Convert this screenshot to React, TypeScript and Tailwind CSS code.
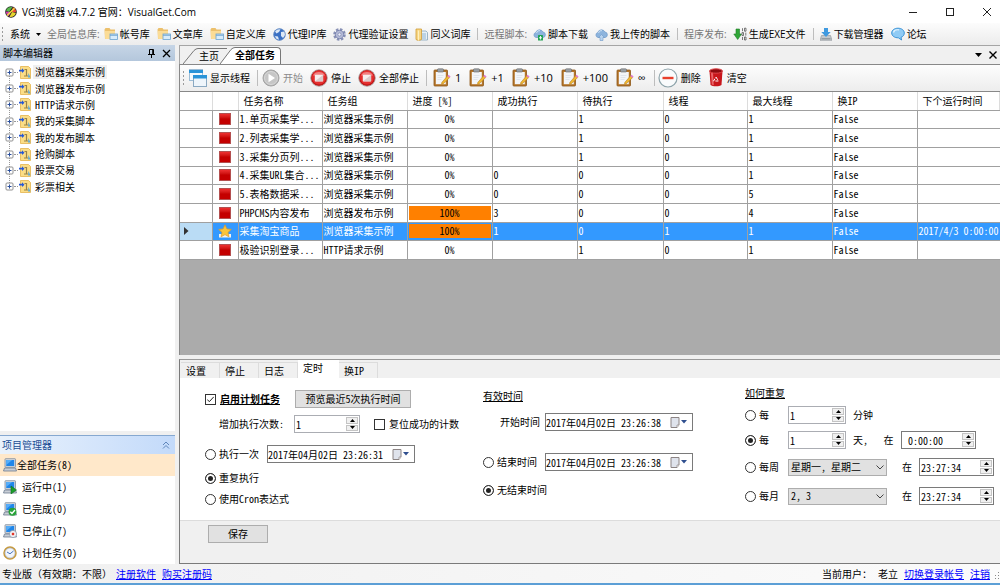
import { useState } from "react";
import type { ReactNode } from "react";

const tree = [
  "浏览器采集示例",
  "浏览器发布示例",
  "HTTP请求示例",
  "我的采集脚本",
  "我的发布脚本",
  "抢购脚本",
  "股票交易",
  "彩票相关",
];

const columns = ["", "", "任务名称", "任务组", "进度 [%]", "成功执行", "待执行", "线程", "最大线程", "换IP", "下个运行时间"];

const tasks = [
  { name: "1.单页采集学...", group: "浏览器采集示例", progress: 0, done: "", wait: "1", threads: "0", max: "1", next: "" },
  { name: "2.列表采集学...", group: "浏览器采集示例", progress: 0, done: "", wait: "1", threads: "0", max: "1", next: "" },
  { name: "3.采集分页列...", group: "浏览器采集示例", progress: 0, done: "", wait: "1", threads: "0", max: "1", next: "" },
  { name: "4.采集URL集合...", group: "浏览器采集示例", progress: 0, done: "0", wait: "0", threads: "0", max: "1", next: "" },
  { name: "5.表格数据采...", group: "浏览器采集示例", progress: 0, done: "0", wait: "0", threads: "0", max: "5", next: "" },
  { name: "PHPCMS内容发布", group: "浏览器发布示例", progress: 100, done: "3", wait: "0", threads: "0", max: "4", next: "" },
  { name: "采集淘宝商品", group: "浏览器采集示例", progress: 100, done: "1", wait: "0", threads: "1", max: "1", next: "2017/4/3 0:00:00" },
  { name: "极验识别登录...", group: "HTTP请求示例", progress: 0, done: "", wait: "1", threads: "0", max: "1", next: "" },
];

const FolderIcon = () => (
  <svg width="14" height="14" viewBox="0 0 14 14">
    <path d="M0.5 2.5 1.5 1h4l1 1.5H11V12H1z" fill="#ecc06c" />
    <path d="M0.8 4H11v8H1.2z" fill="#fbdc96" />
    <rect x="6" y="7" width="7.5" height="5.5" fill="#d8ecfb" stroke="#6ba3cf" strokeWidth="0.8" />
    <path d="M6 8.2h7.5" stroke="#6ba3cf" />
  </svg>
);

const GlobeIcon = () => (
  <svg width="13" height="13" viewBox="0 0 13 13">
    <circle cx="6.5" cy="6.5" r="6" fill="#3a70c4" />
    <path d="M2 3.5C4 1 6 1 7.5 1.6L6 4 3.5 5.5zM8 4l3.5-.5L12.3 7 10 10 8 8zM2 8l3 .5L6 12 3 10.5z" fill="#dce8f6" />
    <circle cx="6.5" cy="6.5" r="5.8" fill="none" stroke="#7395c6" strokeWidth="0.8" />
  </svg>
);

const GearIcon = () => (
  <svg width="13" height="13" viewBox="0 0 13 13">
    <circle cx="6.5" cy="6.5" r="5" fill="none" stroke="#8790b5" strokeWidth="2.6" strokeDasharray="2.4 1.5" />
    <circle cx="6.5" cy="6.5" r="4.2" fill="#b4bad6" stroke="#7c86b0" />
    <circle cx="6.5" cy="6.5" r="1.6" fill="#eef0f8" stroke="#7c86b0" strokeWidth="0.7" />
  </svg>
);

const BookIcon = () => (
  <svg width="13" height="13" viewBox="0 0 13 13">
    <path d="M5 3h6l1.5 1.5V12H5z" fill="#e6f0f8" stroke="#87a6bb" strokeWidth="0.8" />
    <path d="M7 6h4M7 8h4M7 10h4" stroke="#79a6c8" strokeWidth="0.8" />
    <path d="M1 1h5.5v10.5L3.5 12.6 1 11.5z" fill="#f7d683" stroke="#cf9c36" strokeWidth="0.8" />
    <path d="M3.5 2.5v10" stroke="#fff0bd" />
  </svg>
);

const CloudIcon = ({ add = false }: { add?: boolean }) => (
  <svg width="13" height="13" viewBox="0 0 13 13">
    <path d="M3 9.5a2.6 2.6 0 0 1-.3-5A4 4 0 0 1 10 4a2.8 2.8 0 0 1 .2 5.5z" fill="#8db4dd" stroke="#6d98c8" strokeWidth="0.7" />
    <path d="M3.5 5A3 3 0 0 1 7 2.6" stroke="#cfe2f5" fill="none" />
    {add ? (
      <>
        <rect x="5" y="7" width="5" height="5.5" rx="0.6" fill="#23a455" />
        <path d="M7.5 8v3.5M6 9.8h3" stroke="#fff" strokeWidth="0.9" />
      </>
    ) : (
      <path d="M6.5 6.5 9.5 9.5H8v3H5v-3H3.5z" fill="#b9d3ee" stroke="#6d98c8" strokeWidth="0.6" />
    )}
  </svg>
);

const ExeIcon = () => (
  <svg width="14" height="14" viewBox="0 0 14 14">
    <path d="M3 2h3.5v5H8.5L4.7 12.5 0.8 7H3z" fill="#2fa637" stroke="#1e7d27" strokeWidth="0.6" />
    <path d="M9.5 1.2v3M11.5 1.2h1.5v3h-1.5zM9 5.6h1.5v3H9zM12.8 5.6v3M9.5 10v3M11.5 10h1.5v3h-1.5z" fill="none" stroke="#444" strokeWidth="0.7" />
  </svg>
);

const DownloadIcon = () => (
  <svg width="12" height="14" viewBox="0 0 12 14">
    <path d="M1.5 8.5h9L12 13.3H0z" fill="#c3c8cc" stroke="#8a9196" strokeWidth="0.6" />
    <path d="M4 1h4v4h2.7L6 10 1.3 5H4z" fill="#3f9ae0" />
    <path d="M1.5 11.8h9" stroke="#717a80" strokeWidth="0.8" />
  </svg>
);

const BubbleIcon = () => (
  <svg width="14" height="14" viewBox="0 0 14 14">
    <path d="M7 1.2c3.5 0 6.3 2 6.3 4.8 0 2-1.3 3.6-3.3 4.4L10.6 13 7.4 10.8C3.6 10.9.7 8.9.7 6S3.5 1.2 7 1.2z" fill="#8fcbf5" stroke="#2e8bd2" strokeWidth="0.9" />
    <path d="M2.5 5.5C3 3.5 5.5 2.5 8 2.9" stroke="#e6f5ff" strokeWidth="1.2" fill="none" />
  </svg>
);

const WindowsIcon = () => (
  <svg width="18" height="18" viewBox="0 0 18 18">
    <rect x="0.5" y="0.5" width="13" height="11" fill="#f4f9fd" stroke="#9dbdd6" />
    <path d="M0 1h14v3H0z" fill="#2b94d8" />
    <rect x="4.5" y="6.5" width="13" height="11" fill="#eef5fb" stroke="#8aa9c2" />
    <path d="M4 6h14v3.5H4z" fill="#2b94d8" />
  </svg>
);

const PlayIcon = () => (
  <svg width="18" height="18" viewBox="0 0 18 18">
    <circle cx="9" cy="9" r="8" fill="#b9b9b9" stroke="#a3a3a3" />
    <circle cx="9" cy="9" r="6.5" fill="#c6c6c6" stroke="#d8d8d8" />
    <path d="M6.5 4.8 13 9l-6.5 4.2z" fill="#fff" />
  </svg>
);

const StopIcon = () => (
  <svg width="18" height="18" viewBox="0 0 18 18">
    <circle cx="9" cy="9" r="8.3" fill="#c01616" stroke="#a9a3a3" strokeWidth="0.8" />
    <circle cx="9" cy="8.5" r="7" fill="#e52f2f" />
    <path d="M3 6.5a6.5 5.5 0 0 1 12 0z" fill="#f28080" />
    <rect x="4.8" y="5.8" width="8.4" height="6.7" rx="0.8" fill="#f6eeee" />
    <path d="M5 12.3 13 6v6.3z" fill="#d9cccc" />
  </svg>
);

const ClipIcon = () => (
  <svg width="18" height="19" viewBox="0 0 18 19">
    <rect x="1" y="2" width="13.5" height="16" rx="0.8" fill="#b5762a" stroke="#8d5718" strokeWidth="0.8" />
    <path d="M2.8 4h10v12.2h-10z" fill="#f3f5f8" />
    <rect x="4.5" y="0.8" width="6" height="3.2" rx="0.8" fill="#9aa0a6" stroke="#666" strokeWidth="0.6" />
    <path d="M4.5 7.5h6M4.5 9.5h5M4.5 11.5h4" stroke="#dbe1e8" strokeWidth="0.8" />
    <path d="M14.6 7.8 16.6 9.6 10.6 15.6 8.4 16.4 9 14.2z" fill="#f0b732" stroke="#b98320" strokeWidth="0.6" />
    <path d="m14.3 8 1.3-1.3 2 1.9-1.3 1.2z" fill="#e07bd0" />
  </svg>
);

const MinusIcon = () => (
  <svg width="20" height="20" viewBox="0 0 20 20">
    <circle cx="10" cy="10" r="9" fill="#f9fbfc" stroke="#8ea4ab" strokeWidth="1.2" />
    <path d="M4.5 8.8h11v2.4h-11z" fill="#e8402c" />
  </svg>
);

const TrashIcon = () => (
  <svg width="16" height="19" viewBox="0 0 16 19">
    <path d="M1.5 3 2.5 17c2 1.800 9 1.800 11 0l1-14z" fill="#c8161b" />
    <path d="M3 5 3.8 16.5l2 .7L5 5z" fill="#ea6467" />
    <ellipse cx="8" cy="3" rx="6.5" ry="2.2" fill="#8d0c10" stroke="#e2464a" />
    <path d="M8 9 10.4 13H5.6z" fill="none" stroke="#fff" strokeWidth="1" strokeDasharray="3.2 1.3" />
  </svg>
);

const ScriptIcon = () => (
  <svg width="12" height="13" viewBox="0 0 12 13">
    <path d="M1.5 0.5h8l2 2v10h-10z" fill="#fbdd86" stroke="#e3b24c" strokeWidth="0.8" />
    <path d="M5.5 3.5h2v6M5 10h4" stroke="#9a8448" strokeWidth="1.2" fill="none" />
    <path d="M0 3.8h3V2.3L5.5 4.7 3 7V5.6H0z" fill="#2558d8" />
    <path d="m9.500 7 2 4.500H9z" fill="#5ba7d8" />
  </svg>
);

const ComputerIcon = ({ badge }: { badge?: string }) => (
  <svg width="14" height="14" viewBox="0 0 14 14">
    <rect x="2" y="0.7" width="10.5" height="8.6" rx="0.6" fill="#d5d9df" stroke="#7f8c9c" strokeWidth="0.8" />
    <rect x="3.2" y="2" width="8" height="6" fill="#1f86ea" />
    <path d="M3.2 2h6L3.2 7z" fill="#56adf8" />
    <path d="M1.5 10h11l1 3H0.5z" fill="#c9ced6" stroke="#6c7c91" strokeWidth="0.8" />
    {badge === "run" && <path d="M8 6v8l5.500-4z" fill="#1b9e2b" stroke="#0f6d1b" strokeWidth="0.6" />}
    {badge === "done" && (
      <>
        <circle cx="9.5" cy="9.7" r="4" fill="#27a338" />
        <path d="m7.3 9.7 1.7 1.8 3-3.5" stroke="#fff" strokeWidth="1.4" fill="none" />
      </>
    )}
    {badge === "stop" && (
      <>
        <circle cx="10" cy="10" r="3.6" fill="#f3f5f8" stroke="#8a98aa" strokeWidth="0.8" />
        <rect x="8.8" y="8.8" width="2.4" height="2.4" fill="#e0352a" />
      </>
    )}
  </svg>
);

const ClockIcon = () => (
  <svg width="14" height="14" viewBox="0 0 14 14">
    <circle cx="7" cy="7" r="6" fill="#f1f5fb" stroke="#c89a3c" strokeWidth="1.5" />
    <circle cx="7" cy="7" r="5" fill="none" stroke="#8d97a6" strokeWidth="0.5" />
    <path d="m4 6 3 1.800L10.500 5" stroke="#4675c0" strokeWidth="1" fill="none" />
  </svg>
);

const StarIcon = () => (
  <svg width="14" height="14" viewBox="0 0 14 14">
    <path d="M1 10h12v3.5H1z" fill="#f2f2ee" />
    <path d="m7 .8 1.900 4.100 4.400.5-3.300 3 .9 4.400L7 10.600l-3.900 2.200.9-4.400-3.300-3 4.400-.5z" fill="#fac53c" stroke="#de9a25" strokeWidth="0.7" />
  </svg>
);

const Grip = () => (
  <svg width="3" height="14" viewBox="0 0 3 14">
    <path d="M1.5 0v14" stroke="#9a9a9a" strokeDasharray="2 2" />
  </svg>
);

function MenuItem({ icon, children }: { icon: ReactNode; children: ReactNode }) {
  return (
    <button type="button" className="mr-[7px] flex shrink-0 items-center gap-[2px]">
      {icon}
      {children}
    </button>
  );
}

function ToolItem({ icon, children, disabled }: { icon: ReactNode; children: ReactNode; disabled?: boolean }) {
  return (
    <button type="button" disabled={disabled} className="mr-[7px] flex shrink-0 items-center gap-[3px] disabled:text-[#8b8b8b]">
      {icon}
      {children}
    </button>
  );
}

function CountItem({ children }: { children: ReactNode }) {
  return (
    <button type="button" className="mr-2 flex shrink-0 items-center gap-1 text-[11px]">
      <ClipIcon />
      {children}
    </button>
  );
}

function Arrows() {
  return (
    <span className="flex h-full w-3 shrink-0 flex-col gap-px">
      <button type="button" aria-label="+" className="flex flex-1 items-center justify-center border border-[#c4c4c4] bg-[#f0f0f0]">
        <svg width="5" height="3" viewBox="0 0 5 3"><path d="M0 3 2.5 0 5 3z" /></svg>
      </button>
      <button type="button" aria-label="-" className="flex flex-1 items-center justify-center border border-[#c4c4c4] bg-[#f0f0f0]">
        <svg width="5" height="3" viewBox="0 0 5 3"><path d="M0 0 2.5 3 5 0z" /></svg>
      </button>
    </span>
  );
}

function Spinner({ label, value, wide, time }: { label: string; value: string; wide?: boolean; time?: boolean }) {
  return (
    <span
      className={`flex h-[18px] shrink-0 items-center border bg-white p-px ${time ? "w-[75px] border-[#7a7a7a]" : "border-[#abadb3]"} ${
        time ? "" : wide ? "w-[66px]" : "w-[58px]"
      }`}
    >
      <input aria-label={label} defaultValue={value} className="h-full w-0 min-w-0 flex-1 bg-transparent outline-none" />
      <Arrows />
    </span>
  );
}

function DateField({ label, value }: { label: string; value: string }) {
  return (
    <span className="flex h-[18px] w-[148px] shrink-0 items-center border border-[#7a7a7a] bg-white pr-[5px]">
      <input aria-label={label} defaultValue={value} className="h-full w-0 min-w-0 flex-1 bg-transparent outline-none" />
      <button type="button" aria-label={label} className="flex items-center gap-px">
        <svg width="10" height="11" viewBox="0 0 10 11">
          <path d="M1 0.5h8v7.5L7 10.5H1z" fill="#dfe3ec" stroke="#8c8484" />
          <path d="M9 8H7v2.5" fill="#fff" stroke="#8c8484" strokeWidth="0.7" />
        </svg>
        <svg width="6" height="4" viewBox="0 0 6 4"><path d="M0 0h6L3 3.5z" fill="#2f4f8f" /></svg>
      </button>
    </span>
  );
}

function Radio({ id, name, checked, children }: { id: string; name: string; checked?: boolean; children: ReactNode }) {
  return (
    <label htmlFor={id} className="flex shrink-0 items-center gap-[3px]">
      <input
        id={id}
        type="radio"
        name={name}
        defaultChecked={checked}
        className="size-[11px] appearance-none rounded-full border border-[#333] bg-white checked:bg-[#222] checked:shadow-[inset_0_0_0_2px_white]"
      />
      {children}
    </label>
  );
}

function Combo({ label, value }: { label: string; value: string }) {
  return (
    <span className="relative h-[17px] w-[99px] shrink-0">
      <select aria-label={label} className="block h-full w-full appearance-none border border-[#adadad] bg-[#e1e1e1] pl-[2px] leading-[14px]">
        <option>{value}</option>
      </select>
      <svg className="pointer-events-none absolute top-[6px] right-[3px]" width="8" height="5" viewBox="0 0 8 5">
        <path d="m.5.5 3.500 3.500L7.500.5" fill="none" stroke="#444" />
      </svg>
    </span>
  );
}

function Check({ id, checked, children }: { id: string; checked?: boolean; children: ReactNode }) {
  return (
    <label htmlFor={id} className="flex shrink-0 items-center gap-1">
      <span className="relative flex">
        <input id={id} type="checkbox" defaultChecked={checked} className="peer size-[11px] appearance-none border border-[#333] bg-white" />
        <svg className="pointer-events-none absolute inset-[2px] hidden peer-checked:block" width="7" height="7" viewBox="0 0 7 7">
          <path d="m.3 3.500 2 2.200L6.800.8" fill="none" stroke="#222" />
        </svg>
      </span>
      {children}
    </label>
  );
}

export default function App() {
  const [tab, setTab] = useState("定时");
  const [selected, setSelected] = useState(6);

  const projects = [
    { icon: <ComputerIcon />, text: "全部任务(8)" },
    { icon: <ComputerIcon badge="run" />, text: "运行中(1)" },
    { icon: <ComputerIcon badge="done" />, text: "已完成(0)" },
    { icon: <ComputerIcon badge="stop" />, text: "已停止(7)" },
    { icon: <ClockIcon />, text: "计划任务(0)" },
  ];

  return (
    <div className="flex min-h-screen flex-col overflow-hidden border-b-2 border-[#5c9fd6] bg-[#f0f0f0] font-['Open_Sans','Noto_Sans_CJK_SC',sans-serif] text-[10px] leading-[14px] text-black">
      {/* Title bar */}
      <header className="flex h-[23px] items-center bg-white pr-2 pl-[5px]">
        <svg width="12" height="12" viewBox="0 0 12 12">
          <circle cx="6" cy="6" r="5.8" fill="#222" />
          <path d="M1 4.5C2 1.5 5 .5 7.5 1L4 6z" fill="#58b94b" />
          <path d="M8 1.200c2 .8 3.200 2.600 3 5L6 6z" fill="#e9483c" />
          <path d="M10.800 7C10 10 7 11.500 4.500 10.800L7 6z" fill="#e6d52f" />
          <path d="M3.800 10.300C1.800 9.200.8 7.500 1 5.500L6 6z" fill="#cf3fb0" />
          <path d="M2 9.5 9.5 2.2" stroke="#f3e238" strokeWidth="1.3" />
        </svg>
        <h1 className="ml-[5px] flex-1">VG浏览器 v4.7.2 官网：VisualGet.Com</h1>
        <div className="flex items-center gap-[27px]">
          <button type="button" aria-label="最小化"><svg width="10" height="10" viewBox="0 0 10 10"><path d="M1 5.5h8" stroke="#222" /></svg></button>
          <button type="button" aria-label="最大化"><svg width="10" height="10" viewBox="0 0 10 10"><rect x="1.5" y="1.5" width="7" height="7" fill="none" stroke="#222" /></svg></button>
          <button type="button" aria-label="关闭"><svg width="10" height="10" viewBox="0 0 10 10"><path d="m1 1 8 8M9 1 1 9" stroke="#222" /></svg></button>
        </div>
      </header>

      {/* Menu bar */}
      <nav className="flex h-[22px] items-center bg-linear-to-b from-[#fcfcfc] to-[#ececec] pl-px">
        <Grip />
        <button type="button" className="ml-[6px] flex shrink-0 items-center gap-[6px]">
          系统
          <svg width="5" height="3" viewBox="0 0 5 3"><path d="M0 0h5L2.500 3z" /></svg>
        </button>
        <span className="mr-1 ml-[6px] shrink-0 text-[#777]">全局信息库:</span>
        <MenuItem icon={<FolderIcon />}>帐号库</MenuItem>
        <MenuItem icon={<FolderIcon />}>文章库</MenuItem>
        <MenuItem icon={<FolderIcon />}>自定义库</MenuItem>
        <MenuItem icon={<GlobeIcon />}>代理IP库</MenuItem>
        <MenuItem icon={<GearIcon />}>代理验证设置</MenuItem>
        <MenuItem icon={<BookIcon />}>同义词库</MenuItem>
        <span className="mr-[6px] h-3 w-px bg-[#bdbdbd]" />
        <span className="mr-[6px] shrink-0 text-[#777]">远程脚本:</span>
        <MenuItem icon={<CloudIcon add />}>脚本下载</MenuItem>
        <MenuItem icon={<CloudIcon />}>我上传的脚本</MenuItem>
        <span className="mr-[6px] h-3 w-px bg-[#bdbdbd]" />
        <span className="mr-[6px] shrink-0 text-[#777]">程序发布:</span>
        <MenuItem icon={<ExeIcon />}>生成EXE文件</MenuItem>
        <span className="mr-[6px] h-3 w-px bg-[#bdbdbd]" />
        <MenuItem icon={<DownloadIcon />}>下载管理器</MenuItem>
        <MenuItem icon={<BubbleIcon />}>论坛</MenuItem>
      </nav>

      <div className="flex flex-1 font-['Noto_Sans_Mono_CJK_SC','Noto_Sans_CJK_SC',sans-serif]">
        {/* Left column */}
        <aside className="mr-1 flex w-[175px] shrink-0 flex-col">
          <div className="flex h-4 items-center bg-linear-to-b from-[#c6d5e6] to-[#b4c7dc] px-[3px]">
            <h2 className="flex-1">脚本编辑器</h2>
            <button type="button" aria-label="固定" className="mr-[7px]">
              <svg width="7" height="9" viewBox="0 0 7 9"><path d="M1.5 5V.5h4V5M0 5.5h7M3.5 5.5V9M4.7.5V5" fill="none" stroke="#000" /></svg>
            </button>
            <button type="button" aria-label="关闭" className="mr-px">
              <svg width="9" height="9" viewBox="0 0 9 9"><path d="m1 1 7 7M8 1 1 8" stroke="#000" strokeWidth="1.3" /></svg>
            </button>
          </div>
          <div className="flex-1 bg-white pt-[3px]">
            <ul className="relative grid h-[131px] auto-rows-fr">
              <li aria-hidden="true" className="absolute top-2 bottom-2 left-[9px] border-l border-dotted border-[#999]" />
              {tree.map((item, i) => (
                <li key={item} className="relative flex items-center pl-[5px]">
                  <button type="button" aria-label={item} className="flex">
                    <svg width="9" height="9" viewBox="0 0 9 9">
                      <rect x="1" y="1" width="7" height="7" rx="1" fill="#fff" stroke="#919191" />
                      <path d="M2.500 4.500h4M4.500 2.500v4" stroke="#2a4f9c" />
                    </svg>
                  </button>
                  <span className="mr-px w-1 border-t border-dotted border-[#999]" />
                  <ScriptIcon />
                  <span className={`ml-[2px] px-[2px] ${i === 0 ? "bg-[#f0f0f0]" : ""}`}>{item}</span>
                </li>
              ))}
            </ul>
          </div>
          <div className="mt-1 flex h-[19px] items-center border-t border-[#86a8d0] bg-linear-to-r from-[#e9f2fc] to-[#c3dafa] px-[2px] pb-px text-[#1b4c93]">
            <h2 className="flex-1">项目管理器</h2>
            <button type="button" aria-label="折叠" className="mr-[3px]">
              <svg width="8" height="8" viewBox="0 0 8 8"><path d="m1 4 3-3 3 3M1 7.500l3-3 3 3" fill="none" stroke="#5f86bb" /></svg>
            </button>
          </div>
          <ul className="bg-white">
            {projects.map((p, i) => (
              <li key={p.text}>
                <button
                  type="button"
                  className={`flex h-[22px] w-full items-center pl-[3px] ${i === 0 ? "bg-[#ffe8ca]" : "gap-[5px]"}`}
                >
                  {p.icon}
                  {p.text}
                </button>
              </li>
            ))}
          </ul>
        </aside>

        {/* Main column */}
        <main className="flex min-w-0 flex-1 flex-col">
          <div className="flex h-[19px] items-end border-t border-l border-[#a5a5a5] pl-[3px]">
            <button type="button" className="flex h-4 items-stretch">
              <svg width="15" height="16" viewBox="0 0 15 16"><path d="M0 16 11 2.500Q13 .5 15 .5" fill="none" stroke="#777" /></svg>
              <span className="border-t border-[#777] pr-2 pl-px">主页</span>
            </button>
            <button type="button" className="-ml-[7px] flex h-[17px] items-stretch">
              <svg width="15" height="17" viewBox="0 0 15 17"><path d="M0 17 11 2.500Q13 .5 15 .5V17z" fill="#fff" /><path d="M0 17 11 2.500Q13 .5 15 .5" fill="none" stroke="#777" /></svg>
              <span className="rounded-tr-sm border-t border-r border-[#777] bg-white pr-[5px] font-bold">全部任务</span>
            </button>
            <div className="flex h-full flex-1 items-center justify-end gap-[7px] pr-[3px]">
              <button type="button" aria-label="列表"><svg width="7" height="4" viewBox="0 0 7 4"><path d="M0 0h7L3.500 4z" /></svg></button>
              <button type="button" aria-label="关闭"><svg width="8" height="8" viewBox="0 0 8 8"><path d="m.5.5 7 7M7.500.5l-7 7" stroke="#000" strokeWidth="1.4" /></svg></button>
            </div>
          </div>

          <div className="flex h-[27px] items-center border-t border-l border-[#888] bg-linear-to-b from-[#fdfdfd] to-[#ededed] pb-px pl-[2px] font-['Open_Sans','Noto_Sans_CJK_SC',sans-serif]">
            <Grip />
            <span className="w-1" />
            <ToolItem icon={<WindowsIcon />}>显示线程</ToolItem>
            <span className="mr-1 h-4 w-px bg-[#bdbdbd]" />
            <ToolItem icon={<PlayIcon />} disabled>开始</ToolItem>
            <ToolItem icon={<StopIcon />}>停止</ToolItem>
            <ToolItem icon={<StopIcon />}>全部停止</ToolItem>
            <span className="mr-[6px] h-4 w-px bg-[#bdbdbd]" />
            <CountItem>1</CountItem>
            <CountItem>+1</CountItem>
            <CountItem>+10</CountItem>
            <CountItem>+100</CountItem>
            <CountItem>∞</CountItem>
            <span className="mr-[3px] h-4 w-px bg-[#bdbdbd]" />
            <ToolItem icon={<MinusIcon />}>删除</ToolItem>
            <ToolItem icon={<TrashIcon />}>清空</ToolItem>
          </div>

          <div className="flex-1 border-t border-l border-[#888] bg-[#ababab]">
            <table className="h-[168px] w-full table-fixed border-collapse bg-white">
              <colgroup>
                <col className="w-8" />
                <col className="w-[26px]" />
                <col className="w-[84px]" />
                <col className="w-[85px]" />
                <col className="w-[85px]" />
                <col className="w-[85px]" />
                <col className="w-[86px]" />
                <col className="w-[84px]" />
                <col className="w-[85px]" />
                <col className="w-[85px]" />
                <col />
              </colgroup>
              <thead>
                <tr>
                  {columns.map((c, i) => (
                    <th key={i} className="h-[18px] border-r border-b border-r-[#dcdcdc] border-b-[#a0a0a0] pl-[5px] text-left font-normal whitespace-nowrap">{c}</th>
                  ))}
                </tr>
              </thead>
              <tbody>
                {tasks.map((t, i) => (
                  <tr key={t.name} onClick={() => setSelected(i)} className={i === selected ? "bg-[#3399ff] text-white" : ""}>
                    <td className={`border border-l-0 border-[#a0a0a0] pl-1 ${i === selected ? "bg-[#badcf5]" : ""}`}>
                      {i === selected && <svg width="5" height="8" viewBox="0 0 5 8"><path d="M0 0v8l4.500-4z" fill="#333" /></svg>}
                    </td>
                    <td className="border border-[#a0a0a0]">
                      <div className="flex justify-center">
                        {i === 6 ? <StarIcon /> : <span className="h-3 w-3 border border-[#b45050] bg-linear-to-b from-[#ee3030] to-[#c40000] to-50%" />}
                      </div>
                    </td>
                    <td className="overflow-hidden border border-[#a0a0a0] pl-px whitespace-nowrap">{t.name}</td>
                    <td className="overflow-hidden border border-[#a0a0a0] pl-px whitespace-nowrap">{t.group}</td>
                    <td className="border border-[#a0a0a0] px-px text-center text-black">
                      <div className={t.progress ? "bg-[#ff8000]" : ""} style={{ width: t.progress ? `${t.progress}%` : undefined }}>{t.progress}%</div>
                    </td>
                    <td className="border border-[#a0a0a0] pl-px">{t.done}</td>
                    <td className="border border-[#a0a0a0] pl-px">{t.wait}</td>
                    <td className="border border-[#a0a0a0] pl-px">{t.threads}</td>
                    <td className="border border-[#a0a0a0] pl-px">{t.max}</td>
                    <td className="border border-[#a0a0a0] pl-px">False</td>
                    <td className="overflow-hidden border border-r-0 border-[#a0a0a0] pl-px whitespace-nowrap">{t.next}</td>
                  </tr>
                ))}
              </tbody>
            </table>
          </div>

          {/* Task settings */}
          <section className="mt-1 border border-r-0 border-[#7a7a7a] border-t-[#999]">
            <div className="flex h-[18px] items-end pl-px" role="tablist">
              {["设置", "停止", "日志", "定时", "换IP"].map((name) => (
                <button
                  key={name}
                  type="button"
                  role="tab"
                  aria-selected={tab === name}
                  onClick={() => setTab(name)}
                  className={
                    tab === name
                      ? "h-[18px] w-[41px] bg-white pb-[3px] pl-[5px] text-left"
                      : "h-[16px] w-[39px] border-t border-r border-[#dcdcdc] pl-[5px] text-left"
                  }
                >
                  {name}
                </button>
              ))}
            </div>
            <div className="grid h-[143px] grid-cols-[278px_262px_1fr] border-b border-[#dcdcdc] bg-white pl-[25px]">
              <div className="flex flex-col items-start pt-3">
                <div className="flex h-[18px] items-center">
                  <Check id="enable" checked><span className="font-bold underline">启用计划任务</span></Check>
                  <button type="button" className="ml-[15px] h-[18px] w-[116px] border border-[#adadad] bg-[#e1e1e1]">预览最近5次执行时间</button>
                </div>
                <div className="mt-[7px] flex h-[18px] items-center pl-[14px]">
                  <span className="w-[75px]">增加执行次数:</span>
                  <Spinner label="增加执行次数" value="1" wide />
                  <span className="w-[14px]" />
                  <Check id="reset">复位成功的计数</Check>
                </div>
                <div className="mt-3 flex h-[18px] items-center">
                  <Radio id="once" name="mode">执行一次</Radio>
                  <span className="w-2" />
                  <DateField label="执行一次" value="2017年04月02日 23:26:31" />
                </div>
                <div className="mt-[7px] flex h-4 items-center"><Radio id="repeat" name="mode" checked>重复执行</Radio></div>
                <div className="mt-[5px] flex h-4 items-center"><Radio id="cron" name="mode">使用Cron表达式</Radio></div>
              </div>

              <div className="flex flex-col items-start pt-[11px]">
                <h3 className="h-4 underline">有效时间</h3>
                <div className="mt-2 flex h-[18px] items-center pl-[17px]">
                  <span className="w-[45px]">开始时间</span>
                  <DateField label="开始时间" value="2017年04月02日 23:26:38" />
                </div>
                <div className="mt-[22px] flex h-[18px] items-center">
                  <Radio id="end" name="end">结束时间</Radio>
                  <span className="w-2" />
                  <DateField label="结束时间" value="2017年04月02日 23:26:38" />
                </div>
                <div className="mt-[11px] flex h-4 items-center"><Radio id="noend" name="end" checked>无结束时间</Radio></div>
              </div>

              <div className="flex flex-col items-start pt-2">
                <h3 className="h-4 underline">如何重复</h3>
                <div className="mt-1 flex h-[18px] items-center">
                  <span className="w-[43px]"><Radio id="minute" name="cycle">每</Radio></span>
                  <Spinner label="分钟" value="1" />
                  <span className="ml-[7px]">分钟</span>
                </div>
                <div className="mt-[7px] flex h-[18px] items-center">
                  <span className="w-[43px]"><Radio id="day" name="cycle" checked>每</Radio></span>
                  <Spinner label="天" value="1" />
                  <span className="w-[30px] pl-[7px]">天,</span>
                  <span className="w-[25px] text-center">在</span>
                  <Spinner label="每天时间" value=" 0:00:00" time />
                </div>
                <div className="mt-[9px] flex h-[18px] items-center">
                  <span className="w-[43px]"><Radio id="week" name="cycle">每周</Radio></span>
                  <Combo label="每周" value="星期一, 星期二" />
                  <span className="w-8 pl-[15px]">在</span>
                  <Spinner label="每周时间" value="23:27:34" time />
                </div>
                <div className="mt-[11px] flex h-[18px] items-center">
                  <span className="w-[43px]"><Radio id="month" name="cycle">每月</Radio></span>
                  <Combo label="每月" value="2, 3" />
                  <span className="w-8 pl-[15px]">在</span>
                  <Spinner label="每月时间" value="23:27:34" time />
                </div>
              </div>
            </div>
            <div className="pt-1 pb-5 pl-7">
              <button type="button" className="block h-[18px] w-[60px] border border-[#adadad] bg-[#e1e1e1]">保存</button>
            </div>
          </section>
        </main>
      </div>

      {/* Status bar */}
      <footer className="flex h-[19px] items-center justify-between bg-linear-to-r from-[#f0f0f0] to-[#fbfbfb] pl-[2px]">
        <div className="flex">
          <span>专业版（有效期：不限）</span>
          <a href="#register" className="ml-1 text-[#0000ff] underline">注册软件</a>
          <a href="#buy" className="ml-[6px] text-[#0000ff] underline">购买注册码</a>
        </div>
        <div className="flex items-center">
          <span>当前用户：</span>
          <span className="ml-[6px]">老立</span>
          <a href="#switch" className="ml-[6px] text-[#0000ff] underline">切换登录帐号</a>
          <a href="#logout" className="ml-[6px] text-[#0000ff] underline">注销</a>
          <svg className="ml-1" width="6" height="10" viewBox="0 0 6 10"><path d="M4 3h1v1H4zM4 6h1v1H4zM1 6h1v1H1zM4 9h1v1H4zM1 9h1v1H1z" fill="#888" /></svg>
        </div>
      </footer>
    </div>
  );
}
